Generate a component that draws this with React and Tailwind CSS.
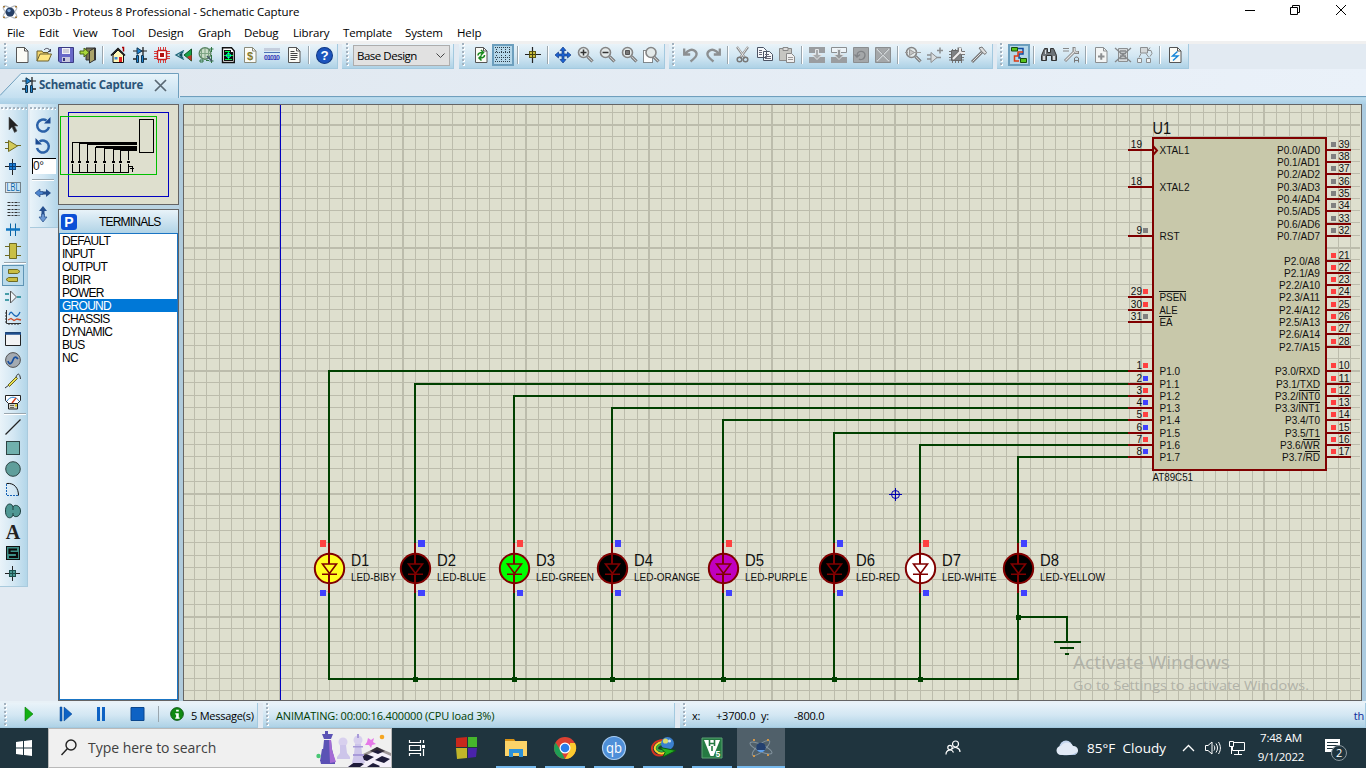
import React from "react";

const Svg = ({ children, s = 16, vb = "0 0 16 16", className = "" }) => (
  <svg width={s} height={s} viewBox={vb} fill="none" className={"shrink-0 overflow-visible " + className}>
    {children}
  </svg>
);

const Page = ({ c = "#555", f = "#fbfbf6", children }) => (
  <Svg>
    <path d="M2.500 .5h8L14 4v11.500H2.500z" fill={f} stroke={c} />
    <path d="M10.500 .5v3.500H14" stroke={c} />
    {children}
  </Svg>
);

const Diode = () => (
  <Svg>
    <path d="M1 4h14" stroke="#222" />
    <path d="M5 .8v6.500l5-3.300z" fill="#1e84d2" stroke="#12354f" />
    <path d="M11 0v8M1 12h3M12 12h3" stroke="#222" strokeWidth="1.300" />
    <path d="M4.500 8.500h2v7h-2zM9.500 8.500h2v7h-2z" fill="#1e84d2" stroke="#12354f" />
  </Svg>
);

const Mag = ({ children, dotted }) => (
  <Svg>
    {dotted && <path d="M.5 3.500h9v12h-9z" fill="#fff" stroke="#222" strokeDasharray="1 1" />}
    <path d="M10.500 9.500l5 5" stroke="#5b5b5b" strokeWidth="3" />
    <path d="M10.500 9.500l5 5" stroke="#c9c9c9" strokeWidth="1.200" />
    <circle cx={dotted ? 8 : 6.500} cy="5.500" r="5" fill="#e3e9e9" stroke="#858585" strokeWidth="1.600" />
    {children}
  </Svg>
);

const Atom = ({ s = 16 }) => (
  <Svg s={s}>
    <ellipse cx="8" cy="8" rx="8.500" ry="3" stroke="#b9bec4" transform="rotate(40 8 8)" />
    <ellipse cx="8" cy="8" rx="8.500" ry="3" stroke="#b9bec4" transform="rotate(-40 8 8)" />
    <circle cx="8" cy="8" r="4.500" fill="#263f66" />
    <circle cx="7" cy="6.600" r="1.700" fill="#7fa7d8" />
    <path d="M1 2h2v1.500H1zM13 2h2v1.500h-2zM1 12.500h2V14H1zM13 12.500h2V14h-2z" fill="#a3793a" />
  </Svg>
);

const G = "#8c8f91";
const icons = {
  new: <Page />,
  open: (
    <Svg>
      <path d="M1 14V4h5l1 1.500h5V7" fill="#f3d56b" stroke="#6b6030" />
      <path d="M1 14l3-7h11.500l-3 7z" fill="#ffe680" stroke="#6b6030" />
      <path d="M8 3c2-2.500 5-2 6 1M14.500 2v2.500H12" stroke="#445" />
    </Svg>
  ),
  save: (
    <Svg>
      <path d="M.5 .5h15v15H2l-1.500-1.500z" fill="#6868c8" stroke="#3b3b83" />
      <path d="M4 1h8v6H4z" fill="#f2f2fa" />
      <path d="M4 10h8v5H4z" fill="#c9c9dd" /><path d="M5 11h2v3H5z" fill="#33337a" />
      <path d="M5 3h6M5 5h6" stroke="#aab" />
    </Svg>
  ),
  exit: (
    <Svg>
      <path d="M6 1h9.500v12H6z" fill="#777152" stroke="#333" />
      <path d="M9.500 4l5-3v12l-5 3z" fill="#aaa36a" stroke="#333" />
      <path d="M0 4h4V1l5 4.500L4 10V7H0z" fill="#a8d63a" stroke="#486616" />
    </Svg>
  ),
  home: (
    <Svg>
      <path d="M3 8v7.500h10.500V8L8 3z" fill="#fff8b8" stroke="#111" />
      <path d="M1 8.500L8 1.500l7 7" stroke="#111" strokeWidth="1.500" />
      <path d="M12 .5h1.500v4" stroke="#a00" strokeWidth="1.500" />
      <path d="M9 10h3v5H9z" fill="#e02020" /><path d="M4.500 10h3v2.500h-3z" fill="#3a8ad8" />
    </Svg>
  ),
  diode: <Diode />,
  pcb: (
    <Svg>
      <path d="M4.500 0v16M6.500 0v16M9.500 0v16M11.500 0v16M0 4.500h16M0 6.500h16M0 9.500h16M0 11.500h16" stroke="#d84040" />
      <rect x="3.500" y="3.500" width="9" height="9" rx="1" fill="#fff" stroke="#c81c1c" strokeWidth="1.500" />
      <rect x="6" y="6" width="4" height="4" fill="#b01010" />
    </Svg>
  ),
  cone: (
    <Svg>
      <path d="M8 3.500L0 8l8 4.500M7 5L4 8l3 3" stroke="#1d6477" strokeWidth="1.300" fill="#bfe0ea" /><circle cx="5" cy="8" r="1.500" fill="#124d5c" />
      <path d="M8 8l7.500-6v12z" fill="#17a24a" stroke="#135529" /><path d="M11 10l4.500 4V8z" fill="#c33426" />
    </Svg>
  ),
  gerber: (
    <Svg>
      <circle cx="7" cy="6.500" r="5.800" fill="#c9dcc8" stroke="#5b8563" strokeWidth="1.400" />
      <path d="M1.500 6.500h11M7 1v11M3.500 3v7M10.500 3v7" stroke="#7da383" />
      <path d="M2 13h3v2H2zM8 13.500h3M13.500 0v5M13.500 8v8M11.500 2h4M11.500 14h4" stroke="#2f7440" />
      <path d="M9 9l5 5" stroke="#456" strokeWidth="1.500" />
    </Svg>
  ),
  greendoc: (
    <Svg>
      <path d="M2.500 .8h9L14.300 4v11.500H2.500z" fill="#fff" stroke="#111" strokeWidth="1.400" />
      <path d="M4 3h7v2h2v9H4z" fill="#101010" />
      <path d="M5 4.500h5M5 12.500h7M4 8.500h9M8.500 5v7" stroke="#0f4" />
      <circle cx="8.500" cy="8.500" r="2" stroke="#0fe" />
    </Svg>
  ),
  dollar: (
    <Page c="#8b8b7a">
      <text x="5" y="12.500" fontSize="11" fill="#837a2b" fontFamily="Liberation Sans" fontWeight="bold">$</text>
    </Page>
  ),
  bits: (
    <Svg>
      <path d="M0 2.500h16" stroke="#c5cedd" strokeWidth="3" />
      <path d="M0 5.500h16" stroke="#4d73b5" />
      <text x="0" y="13" textLength="16" fontSize="7" fill="#3434b6" fontFamily="Liberation Sans" fontWeight="bold">01010</text>
    </Svg>
  ),
  doc: <Page><path d="M4.500 6.500h7M4.500 8.500h7M4.500 10.500h7M4.500 12.500h5M4.500 4.500h4" stroke="#444" /></Page>,
  help: (
    <Svg s={17}>
      <circle cx="8" cy="8" r="7.500" fill="#1c54bd" stroke="#123a85" />
      <text x="4.300" y="12.500" fontSize="12.500" fill="#fff" fontFamily="Liberation Sans" fontWeight="bold">?</text>
    </Svg>
  ),
  refresh: (
    <Page>
      <path d="M5 8.500C5 6 6.500 5.500 9.500 5.500M8 3l2.500 2.500L8 8M11.500 8c0 2.500-1.500 3-4.500 3M8.500 8.500L6 11l2.500 2.500" stroke="#17891c" strokeWidth="1.500" />
    </Page>
  ),
  grid: (
    <Svg>
      <g fill="#2c3b46">
        {[1, 6, 11, 15].map((y) => [0, 2, 4, 6, 8, 10, 12, 14].map((x) => <rect key={x + "-" + y} x={x} y={y - 1} width="1" height="1" />))}
        {[1, 6, 10, 14].map((x) => [2, 4, 8, 12].map((y) => <rect key={x + "," + y} x={x} y={y} width="1" height="1" />))}
      </g>
    </Svg>
  ),
  origin: (
    <Svg><path d="M7.500 0v16M0 7.500h16" stroke="#222" strokeWidth="1.200" /><rect x="4.500" y="4.500" width="6" height="6" fill="#c9be3d" stroke="#5d5815" /><path d="M7.500 4.500v6M4.500 7.500h6" stroke="#444010" /></Svg>
  ),
  move: <Svg><path d="M8 0l3 3.500H9V7h3.500V5L16 8l-3.500 3V9H9v3.500h2L8 16l-3-3.500h2V9H3.500v2L0 8l3.500-3v2H7V3.500H5z" fill="#1b62d2" stroke="#153b85" strokeWidth=".7" /></Svg>,
  zin: <Mag><path d="M3.500 5.500h6M6.500 2.500v6" stroke="#333" strokeWidth="1.500" /></Mag>,
  zout: <Mag><path d="M3.500 5.500h6" stroke="#333" strokeWidth="1.500" /></Mag>,
  zall: <Mag><path d="M4.500 3.500h4v4h-4z" fill="#777" stroke="#555" /></Mag>,
  zarea: <Mag dotted />,
  undo: <Svg><path d="M1.200 1.500v6h6M2 7C5 3 9 1.500 12 4s2 5.500-4.500 10.500" stroke={G} strokeWidth="2.300" /></Svg>,
  redo: <Svg><path d="M14.800 1.500v6h-6M14 7C11 3 7 1.500 4 4s-2 5.500 4.500 10.500" stroke={G} strokeWidth="2.300" /></Svg>,
  cut: <Svg><path d="M2 0l8 11M13 0L5 11" stroke="#888" strokeWidth="2.200" /><path d="M2.500 0l7.500 11M12.500 0L5 11" stroke="#eee" strokeWidth=".9" /><circle cx="4.500" cy="12.500" r="2.300" stroke="#777" strokeWidth="1.500" /><circle cx="10.500" cy="12.500" r="2.300" stroke="#777" strokeWidth="1.500" /></Svg>,
  copy: <Svg><path d="M.5 .5h6l3 3v7h-9zM6.500 4.500h6l3 3v6h-9z" fill="#f6f8fb" stroke="#4b5364" /><path d="M2 3.500h3M2 5.500h3M2 7.500h3M8 7.500h4M8 9.500h6M8 11.500h6" stroke="#667" /></Svg>,
  paste: <Svg><path d="M.5 1.500h12v12H.5z" fill="#c6c6c2" stroke="#8a8a8a" /><path d="M4 .5h5v3H4z" fill="#ddd" stroke="#888" /><path d="M7.500 6.500h5l3 3v6h-8z" fill="#f0f0f0" stroke="#888" /><path d="M9 10.500h5M9 12.500h5" stroke="#999" /></Svg>,
  bcopy: <Svg><path d="M0 0h16v6H0zM0 10h16v6H0z" fill="#9a9da0" /><path d="M6.500 2.500h3v5H13L8 12.500 3 7.500h3.500z" fill="#a9acae" stroke="#e4e7e9" /></Svg>,
  bmove: <Svg><path d="M.5 .5h15v5H.5z" fill="#eef4f8" stroke={G} /><path d="M0 10h16v6H0z" fill="#9a9da0" /><path d="M6.500 2.500h3v5H13L8 12.500 3 7.500h3.500z" fill="#96999b" stroke="#dfe3e5" /></Svg>,
  brot: <Svg><path d="M.5 .5h15v15H.5z" fill="#a4a7a9" stroke="#8b8e90" /><path d="M4 9C4 3 12 3 12 8s-5 5-6 4M1.500 7.500L4 10l3-2.500" stroke="#808386" strokeWidth="1.300" /></Svg>,
  bdel: <Svg><path d="M.5 .5h15v15H.5z" fill="#a4a7a9" stroke="#8b8e90" /><path d="M2 2l12 12M14 2L2 14" stroke="#d3d7d9" strokeWidth="1.300" /><path d="M3 2l11 11M13 2L2 13" stroke="#84878a" strokeWidth=".6" /></Svg>,
  pick: <Mag><path d="M0 5.500h3M9 5.500h7" stroke="#999" /><path d="M4.500 2.500l5 3-5 3z" fill="#c5c5c5" stroke="#999" /></Mag>,
  mkdev: <Svg><path d="M0 8h4M0 12h4M9 10.500h5M10 3.500h6M13 .5v6" stroke={G} strokeWidth="1.500" /><path d="M4 5.500v10l6-5z" fill="#d9dddf" stroke={G} /></Svg>,
  pkg: <Svg><path d="M3.500 2v14M6.500 2v14M9.500 2v14M12.500 2v14M0 4.500h15M0 7.500h15M0 10.500h15M0 13h15" stroke="#777" /><path d="M2.500 3.500h10v10h-10z" fill="#7f8284" stroke="#666" /><path d="M4 12l7-7M10.500 .5v4L12 6h4" stroke="#777" strokeWidth="4" /><path d="M4 12l7-7M11 1v3.500L12.500 6H16" stroke="#eee" strokeWidth="2" /></Svg>,
  hammer: <Svg><path d="M1 15L11 5" stroke="#777" strokeWidth="3" /><path d="M1.500 14.500L10.500 5.500" stroke="#ddd" strokeWidth="1" /><path d="M8 1l3-1 4.500 5.500L14 7.500 11 5z" fill="#ddd" stroke="#777" /></Svg>,
  wire: <Svg><path d="M7 1.500h5V7H8v4h2" stroke="#124b9e" strokeWidth="1.500" /><path d="M8 14H3.500V9H7V5h5" stroke="#dd3b14" strokeWidth="1.500" /><path d="M.5 .5h6v3.500h-6zM9.500 11.500h6v4h-6z" fill="#58c21c" stroke="#174d0b" /></Svg>,
  find: <Svg><path d="M3.500 1.500h3v4h3v-4h3l3 7v5h-5v-5h-5v5h-5v-5z" fill="#6d7378" stroke="#333" /><path d="M2 9h2v4H2zM12 9h2v4h-2zM4 3h1v4H4z" fill="#d5d9dc" /></Svg>,
  prop: <Svg><path d="M0 1.500h6M0 4h6" stroke="#888" /><path d="M2 14L11 5M11 0v4l1.500 1.500H16" stroke="#888" strokeWidth="3" /><path d="M2.500 13.500L11 5M11.300 1v3l1.200 1.200H15" stroke="#e5e5e5" strokeWidth="1.100" /><path d="M11.500 15.500V11l1.500-1h1l1.500 1v4.500M11.500 13.500h4" stroke="#777" /></Svg>,
  newsh: <Page c={G} f="#f3f5f5"><path d="M5 9.500h6.500M8.250 6.200v6.600" stroke={G} strokeWidth="2" /></Page>,
  delsh: <Svg><path d="M3.500 1.500h9v13h-9z" fill="#d6dadc" stroke={G} /><path d="M5 4h6M5 6.500h6M5 9h6M5 11.500h6M0 1l16 14M16 1L0 15" stroke="#85888b" strokeWidth="1.300" /></Svg>,
  parent: <Svg><path d="M.5 11.500h4v4h-4zM9.500 11.500h4v4h-4z" fill="#eef2f4" stroke={G} /><path d="M4 6.500l-2 4M9 6.500l3 4M13 .5l-2 3h3l1 3-2 3" stroke={G} /><path d="M3.500 .5h7v5.500h-7z" fill="#d4d8da" stroke={G} /></Svg>,
  elec: <Page><path d="M10.500 4.500L5.500 9h5.500L6 13.500" stroke="#1686d8" strokeWidth="1.400" /></Page>,

  arrow: <Svg><path d="M4 0v13l3-3 2.500 5.500L12 14 9.500 9H13z" fill="#222" stroke="#555" strokeWidth=".6" /></Svg>,
  comp: <Svg><path d="M0 4.500h4M0 10.500h4M12 7.500h4" stroke="#6f6b22" /><path d="M3.500 2.500v11l9-5.500z" fill="#d3ca58" stroke="#6f6b22" /></Svg>,
  junc: <Svg><path d="M7.500 0v16M0 7.500h16" stroke="#222" /><rect x="4.500" y="4.500" width="6" height="6" fill="#1c80d8" stroke="#0a4a8e" /><path d="M7.500 5v5M5 7.500h5" stroke="#0a3b70" /></Svg>,
  lbl: <Svg><path d="M.5 2.500h15v10H.5z" stroke="#222" strokeDasharray="1 1" /><text x="1.500" y="11.200" textLength="13" fontSize="10" fill="#0867ac" fontFamily="Liberation Sans" lengthAdjust="spacingAndGlyphs">LBL</text></Svg>,
  script: <Svg><path d="M2.500 1.500h12M2.500 4.500h12M2.500 8.500h12M2.500 11.500h12M2.500 14.500h12" stroke="#333" strokeDasharray="3 1 2 1" /></Svg>,
  bus: <Svg><path d="M5.500 1.500V14M10.500 1.500V14" stroke="#0864a4" /><path d="M1 7.500h14" stroke="#0f75c0" strokeWidth="2.500" /></Svg>,
  sub: <Svg><path d="M0 3.500h4M0 12.500h4M12 3.500h4M12 12.500h4" stroke="#6f6b22" /><path d="M4.500 .5h7v15h-7z" fill="#c9bf45" stroke="#6f6b22" /></Svg>,
  term: <Svg><path d="M3.500 1.500h9l2.500 2-2.500 2h-9zM12.500 9.500h-9l-2.500 2 2.500 2h9z" fill="#cabd42" stroke="#6f6b22" /></Svg>,
  pin: <Svg><path d="M0 5h4M0 11h4M12 8h4" stroke="#15838e" strokeWidth="1.300" /><path d="M5.500 2v12l6-6z" fill="#eef5fa" stroke="#555" /></Svg>,
  graph: <Svg><path d="M1.500 0v13.500H16M0 3h2M0 6h2M0 9h2M0 12h2M4 13v2M7 13v2M10 13v2M13 13v2" stroke="#333" /><path d="M4 5c2-5 3-2 5 0s4 2 6-3" stroke="#1767b7" strokeWidth="1.300" /><path d="M3 10l3-1.500 3 2 3-1.500 4 1" stroke="#ca4b28" strokeWidth="1.300" /></Svg>,
  win: <Svg><path d="M.5 1.500h15v13H.5z" fill="#f2f3f4" stroke="#222" /><path d="M0 2.500h16" stroke="#1e4f8f" strokeWidth="2.500" /></Svg>,
  gen: <Svg><circle cx="8" cy="8" r="7.400" fill="#a3aab1" stroke="#555" /><path d="M3 9c1.500 5 4 2 5-1s2.500-4 5-1" stroke="#174f9f" strokeWidth="1.700" /></Svg>,
  probe: <Svg><path d="M0 15l4-3M11 4c2-5 4-3 4.500 2" stroke="#333" /><path d="M3 12l8-8 1.500 1.500-8 8z" fill="#e8e050" stroke="#666324" /></Svg>,
  meter: <Svg><path d="M.5 1.500h15v5l-3 3h-9l-3-3z" fill="#fff" stroke="#222" /><path d="M2 7c3-5 9-5 12 0" stroke="#2a7dcb" /><path d="M7 9l4-5" stroke="#d33d1b" strokeWidth="1.500" /><path d="M3.500 9.500h9v5.500h-9z" fill="#d5d5cc" stroke="#222" /><path d="M5 11.500h4M5 13.500h4" stroke="#665" /><path d="M10 11.500h2" stroke="#d8c800" strokeWidth="2" /></Svg>,
  line: <Svg><path d="M.5 15.500l15-15" stroke="#222" strokeWidth="1.300" /></Svg>,
  box: <Svg><rect x="1.500" y="1.500" width="13" height="13" fill="#70b0ad" stroke="#2e4444" /></Svg>,
  circ: <Svg><circle cx="8" cy="8" r="7.300" fill="#5f9e9b" stroke="#2e4444" /></Svg>,
  arc: <Svg><path d="M1.500 2v11.500H13" stroke="#1763b5" strokeDasharray="2 1" /><path d="M1.500 1.500c8-1 12 5 12 12" stroke="#111" /></Svg>,
  path: <Svg><path d="M8 4C7-.5.5-.5.5 8S7 16 8 12c1.500 3 7.500 2 7.500-4S9 1 8 4z" fill="#4f9894" stroke="#1d3f3e" /><path d="M8 4v3M8 10v2" stroke="#1d3f3e" /></Svg>,
  text: <div className="font-['Liberation_Serif'] text-[20px] leading-[20px] font-bold text-[#222]">A</div>,
  sym: <Svg><rect x="1.500" y="1.500" width="13" height="13" fill="#3d8f87" stroke="#111" /><path d="M12 4.500H4.500V8H12v4H4" stroke="#0a0a0a" strokeWidth="2.200" /></Svg>,
  mark: <Svg><path d="M7.500 0v15M0 7.500h15" stroke="#222" /><rect x="4.500" y="4.500" width="6" height="6" fill="#4a9a94" stroke="#1d4f4b" /><path d="M7.500 5v5M5 7.500h5" stroke="#1d4f4b" /></Svg>,
};

const HGrip = () => (
  <svg width="4" height="26" className="shrink-0">
    {[1, 5, 9, 13, 17, 21].map((y) => (
      <g key={y}><rect x="1" y={y + 1} width="2" height="2" fill="#fff" /><rect x="0" y={y} width="2" height="2" fill="#a3b2bf" /></g>
    ))}
  </svg>
);

const VGrip = () => (
  <svg width="26" height="4" className="shrink-0">
    {[0, 4, 8, 12, 16, 20, 24].map((x) => (
      <g key={x}><rect x={x + 1} y="1" width="2" height="2" fill="#fff" /><rect x={x} y="0" width="2" height="2" fill="#a3b2bf" /></g>
    ))}
  </svg>
);

const Sep = () => (
  <div className="flex h-[18px] w-2 shrink-0 justify-center">
    <div className="w-px bg-[#9aa6ae]" /><div className="w-px bg-white" />
  </div>
);

const Cells = ({ names, active }) =>
  names.map((n, i) =>
    n === "|" ? <Sep key={i} /> : (
      <div key={i} className={"flex h-[22px] w-[22px] shrink-0 items-center justify-center " + (n === active ? "border-2 border-[#6c9fbe] bg-[#b5d7e9]" : "")}>
        {icons[n]}
      </div>
    )
  );

const bar = "flex items-center border-r border-b border-[#a3c9df] bg-linear-to-b from-[#e9f3f9] via-[#d3e7f3] to-[#aed2e6] ";
const topBar = bar + "pb-[2px] ";

const tools = ["arrow", "comp", "junc", "lbl", "script", "bus", "sub", "-", "term", "pin", "graph", "win", "gen", "probe", "meter", "-", "line", "box", "circ", "arc", "path", "text", "sym", "mark"];

/* ---------- schematic ---------- */
const OX = 895, OY = 494, P = 12.3;
const T = ({ x, y, s = 10.6, w, end, children }) => (
  <text x={x} y={y} fontSize={s} fill="#111" textAnchor={end ? "end" : "start"} textLength={w} lengthAdjust="spacingAndGlyphs" fontFamily="'Liberation Sans', Arial, sans-serif">{children}</text>
);

const Grid = () => {
  const out = [];
  for (let k = -58; k <= 38; k++) {
    const x = Math.round(OX + k * P), m = k % 10 === 0;
    out.push(<rect key={"x" + k} x={m ? x - 1 : x} y="105" width={m ? 2 : 1} height="595" fill="#bcbcac" />);
  }
  for (let k = -32; k <= 17; k++) {
    const y = Math.round(OY + k * P), m = k % 10 === 0;
    out.push(<rect key={"y" + k} x="184" y={y - 1} width="1176" height={m ? 2 : 1} fill="#bcbcac" />);
  }
  return out;
};

const leds = [
  [329, "D1", "LED-BIBY", "#ffff20", 371, 45, 1],
  [415, "D2", "LED-BLUE", "#000", 384, 49, 0],
  [514, "D3", "LED-GREEN", "#00ff00", 396, 58, 1],
  [612, "D4", "LED-ORANGE", "#000", 408, 66, 0],
  [723, "D5", "LED-PURPLE", "#c000c0", 420, 62.5, 1],
  [834, "D6", "LED-RED", "#000", 433, 44, 0],
  [920, "D7", "LED-WHITE", "#fff", 445, 54.5, 1],
  [1018, "D8", "LED-YELLOW", "#000", 457, 65, 0],
];

const R = "#ff4040", B = "#4040ff", Y = "#808080";
const left = [
  [150, "19", "XTAL1", null, 30], [187, "18", "XTAL2", null, 30], [236, "9", "RST", Y, 20],
  [297, "29", "PSEN", R, 27, 1], [310, "30", "ALE", R, 18], [322, "31", "EA", Y, 13, 1],
  [371, "1", "P1.0", R, 20.5], [384, "2", "P1.1", B, 20], [396, "3", "P1.2", R, 20.5], [408, "4", "P1.3", B, 20.5],
  [420, "5", "P1.4", R, 20.5], [433, "6", "P1.5", B, 20.5], [445, "7", "P1.6", R, 20.5], [457, "8", "P1.7", B, 20.5],
];
const right = [
  [150, 39, "P0.0/AD0", 43], [162, 38, "P0.1/AD1", 43], [174, 37, "P0.2/AD2", 43], [187, 36, "P0.3/AD3", 43],
  [199, 35, "P0.4/AD4", 43], [211, 34, "P0.5/AD5", 43], [224, 33, "P0.6/AD6", 43], [236, 32, "P0.7/AD7", 43],
  [261, 21, "P2.0/A8", 36], [273, 22, "P2.1/A9", 36], [285, 23, "P2.2/A10", 41], [297, 24, "P2.3/A11", 41],
  [310, 25, "P2.4/A12", 41], [322, 26, "P2.5/A13", 41], [334, 27, "P2.6/A14", 41], [347, 28, "P2.7/A15", 41],
  [371, 10, "P3.0/RXD", 45], [384, 11, "P3.1/TXD", 44], [396, 12, "P3.2/INT0", 45, 21], [408, 13, "P3.3/INT1", 45, 21],
  [420, 14, "P3.4/T0", 35], [433, 15, "P3.5/T1", 35], [445, 16, "P3.6/WR", 40, 17], [457, 17, "P3.7/RD", 38, 15],
];

const Schematic = () => (
  <svg width="1177" height="595" viewBox="184 105 1177 595" className="block">
    <rect x="184" y="105" width="1177" height="595" fill="#dedfce" />
    <Grid />
    <rect x="280" y="105" width="1" height="595" fill="#0000c0" />
    <g stroke="#004000" strokeWidth="2">
      {leds.map(([x, , , , y]) => <path key={x} d={`M1129 ${y}H${x}V679`} fill="none" />)}
      <path d="M328 679H1019M1018 617H1067V641" fill="none" />
      <path d="M1054 642h27M1060 648h14M1065 654h4" />
    </g>
    {leds.slice(1, 7).map(([x]) => <rect key={x} x={x - 2} y="677" width="5" height="5" fill="#004000" />)}
    <rect x="1016" y="615" width="5" height="5" fill="#004000" />
    {leds.map(([x, n, l, c, , w, on], i) => (
      <g key={n}>
        <path d={`M${x} 543v50`} stroke="#800000" strokeWidth="2" />
        <circle cx={x + 0.5} cy="568.500" r="14.700" fill={c} stroke="#800000" strokeWidth="2" />
        <path d={`M${x} 553v11M${x} 574v10`} stroke="#800000" strokeWidth="2" fill="none" />
        <path d={`M${x - 6.5} 564h14l-7 9.500zM${x - 7} 574.300h15`} stroke="#800000" strokeWidth="1.600" fill="none" />
        <rect x={i ? x + 3 : x - 9} y="540" width={i === 1 ? 7 : 6} height="7" fill={on ? R : B} />
        <rect x={i ? x + 3 : x - 9} y="590" width={i === 1 ? 7 : 6} height="6" fill={B} />
        <T x={x + 22} y="566" s="15.800" w={i ? 19 : 18}>{n}</T>
        <T x={x + 22} y="581" w={w}>{l}</T>
      </g>
    ))}
    <g stroke="#0000b0" fill="none">
      <circle cx="895.500" cy="494.500" r="4" />
      <path d="M889 494.500h13M895.500 488v13" />
    </g>
    <rect x="1153" y="138" width="173" height="332" fill="#c8c8aa" stroke="#800000" strokeWidth="2" />
    <path d="M1153 146l4 4.500-4 4.500" stroke="#800000" strokeWidth="2" fill="none" />
    <T x="1152.500" y="134" s="15.800" w="18.500">U1</T>
    <T x="1152.500" y="481" w="40.500">AT89C51</T>
    {left.map(([y, n, l, c, w, o]) => (
      <g key={n}>
        <rect x="1128" y={y - 1} width="25" height="2" fill="#800000" />
        <T x="1142" y={y - 2} w={n.length * 5.6} end>{n}</T>
        {c && <rect x="1143" y={y - 8} width="5" height="5" fill={c} />}
        <T x="1159.500" y={y + 4} w={w}>{l}</T>
        {o && <rect x="1159" y={y - 6} width={w} height="1" fill="#111" />}
      </g>
    ))}
    {right.map(([y, n, l, w, o]) => (
      <g key={n}>
        <rect x="1327" y={y - 1} width="24" height="2" fill="#800000" />
        <T x="1338.500" y={y - 2} w={11.2}>{n}</T>
        <rect x="1331" y={y - 8} width="5" height="5" fill={y < 240 ? Y : R} />
        <T x="1320" y={y + 4} w={w} end>{l}</T>
        {o && <rect x={1320 - o} y={y - 6} width={o} height="1" fill="#111" />}
      </g>
    ))}
    <g fill="#b1b2a8" fontFamily="'Open Sans', sans-serif">
      <text x="1073" y="669" fontSize="18.500" textLength="157" lengthAdjust="spacingAndGlyphs">Activate Windows</text>
      <text x="1073" y="690" fontSize="13.500" textLength="236" lengthAdjust="spacingAndGlyphs">Go to Settings to activate Windows.</text>
    </g>
  </svg>
);

const Overview = () => (
  <svg width="119" height="99" viewBox="59 105 119 99" className="block" fill="none" shapeRendering="crispEdges">
    <rect x="59" y="105" width="119" height="99" fill="#dedfce" />
    <rect x="68.500" y="112.500" width="100" height="84" stroke="#0000c0" />
    <rect x="139.500" y="119.500" width="14" height="33" stroke="#000" />
    <rect x="60.500" y="116.500" width="96" height="58" stroke="#00c000" />
    <path d="M72.500 142.500v18M72.500 164v8.500H128.500V164M128.500 160V151M79.500 143v18M79.500 164v8M87.500 144v17M87.500 164v8M95.500 147v14M95.500 164v8M104.500 148v13M104.500 164v8M113.500 149v12M113.500 164v8M120.500 150v11M120.500 164v8M128 166.500h4v5M130 168.500h4" stroke="#000" />
    <path d="M72 142.500h65M79 143.500h58M87 144.500h50M96 146.500h41M104 148.500h33M113 149.500h24M120 150.500h17M96 147.500h41" stroke="#000" />
    <path d="M71 161.500h3M78 161.500h3M86 161.500h3M94 161.500h3M103 161.500h3M112 161.500h3M119 161.500h3M127 161.500h3" stroke="#000" strokeWidth="2" />
  </svg>
);

const tasks = [
  <Svg s={24} vb="0 0 24 24"><path d="M1 2l11-1v10H1z" fill="#c8281c" /><path d="M13 1h9v10h-9z" fill="#46b52c" /><path d="M1 12h11v10L2 23z" fill="#c1b52a" /><path d="M13 12h9l-1 9-8 1z" fill="#4a23ab" /></Svg>,
  <Svg s={24} vb="0 0 24 24"><path d="M1 3h9l2 3H1z" fill="#d99213" /><path d="M1 5h22v15H1z" fill="#fbd368" /><path d="M5 13h14v8h-4v-4h-6v4H5z" fill="#2d92d8" /></Svg>,
  <Svg s={24} vb="0 0 24 24"><circle cx="12" cy="12" r="11" fill="#dc4132" /><path d="M2.500 6.500L8 15l4 8A11 11 0 0 1 2.500 6.500z" fill="#1f9d55" /><path d="M12 23l5-9V7h5a11 11 0 0 1-10 16z" fill="#fccb2f" /><circle cx="12" cy="12" r="5.500" fill="#fff" /><circle cx="12" cy="12" r="4.300" fill="#2b7de9" /></Svg>,
  <Svg s={26} vb="0 0 26 26"><circle cx="13" cy="13" r="11.500" fill="#4e8fd8" stroke="#a9cdf2" strokeWidth="1.200" /><text x="5" y="17.500" fontSize="15" fill="#fff" fontFamily="Open Sans" textLength="16" lengthAdjust="spacingAndGlyphs">qb</text></Svg>,
  <Svg s={26} vb="0 0 26 26"><path d="M14 5C4 5 0 12 3 17s9 4 13 1" stroke="#d83421" strokeWidth="2" /><path d="M14 7c-8 0-11 6-8 9s7 3 10 1" stroke="#f6d52f" strokeWidth="2" /><path d="M14 9c-7 0-8 5-6 6s4 2 6 0" stroke="#35b43e" strokeWidth="2" /><circle cx="17.500" cy="8.500" r="6.500" fill="#3b80cf" /><circle cx="15.500" cy="6" r="2.600" fill="#d8dc6b" /><circle cx="19.500" cy="6" r="1.500" fill="#cfe3f6" /><path d="M10 12.500l16 3-13 6.500 2-4.500z" fill="#28b324" stroke="#0b5b10" /></Svg>,
  <Svg s={22} vb="0 0 22 22"><path d="M1 1h20v20H1z" fill="#257a43" stroke="#5ba273" /><path d="M3 3h16l-6.500 16h-3z" fill="#fff" /><path d="M8.500 3v6M13.500 3v6M8 6.500h6M11 9v5" stroke="#257a43" strokeWidth="1.600" /><text x="14.500" y="19.500" fontSize="8.500" fill="#fff" fontFamily="Liberation Sans" fontWeight="bold">5</text></Svg>,
  <Svg s={26} vb="0 0 26 26"><ellipse cx="13" cy="13" rx="12" ry="3.500" stroke="#84949e" transform="rotate(25 13 13)" /><ellipse cx="13" cy="13" rx="11" ry="3.500" stroke="#84949e" transform="rotate(-40 13 13)" /><circle cx="13" cy="12.500" r="4.800" fill="#23406f" /><path d="M9 15c2 3 6 3 8 0z" fill="#5fa0e8" /><path d="M5 4h2v2H5zM19 4h2v2h-2zM5 20h2v2H5zM19 19h2v2h-2z" fill="#d0964b" /></Svg>,
];

const Chess = () => (
  <svg width="75" height="38" viewBox="0 0 75 38" fill="none">
    <path d="M30 38L61 18l14 6v14z" fill="#f4effa" />
    <path d="M61 18l8 4-7 3-8-3zM50 25l8 3-7 4-9-3zM66 27l8 3-6 4-9-3zM40 32l8 3-4 3H32zM57 34l7 3-1 1H51z" fill="#1e1b3a" />
    <path d="M61 18l14 6v3L61 21l-14 7v-3z" fill="#4a4038" opacity=".5" />
    <path d="M6 5h3V2h3v3h5l-2 5H8zM8 11h7l1 10H7zM6 20h10l3 12H4z" fill="#5b53b5" />
    <path d="M4 31h15v4H5z" fill="#5a4fb4" />
    <path d="M13 11h2l1 10 4 12-6 1z" fill="#a46ad4" />
    <circle cx="27" cy="13" r="4.500" fill="#d8d0ee" /><path d="M24 16h6l1 8 3 4v2H21v-2l3-4z" fill="#cdc5ea" />
    <circle cx="42" cy="11" r="4.500" fill="#d8d0ee" /><path d="M39 15h6l1 10 3 9H36l2-9z" fill="#cdc5ea" /><path d="M41 5h2v4h-2zM37 25h11v2H37zM37 17h10v1.500H37z" fill="#a79ad8" />
    <path d="M52 9l3 2 3-2-1 4 3 2-4 1-1 3-2-3-4 0 2-3z" fill="#e67be8" />
    <circle cx="66" cy="8" r="2.300" fill="#f5a623" /><circle cx="2.500" cy="27" r="2.200" fill="#48c774" />
  </svg>
);

const menus = [["File", 32], ["Edit", 34], ["View", 39], ["Tool", 36], ["Design", 50], ["Graph", 46], ["Debug", 49], ["Library", 50], ["Template", 62], ["System", 52], ["Help", 30]];

export default function App() {
  return (
    <div className="flex h-[768px] w-[1366px] flex-col overflow-hidden bg-[#e2eaf2] font-['Open_Sans','Noto_Sans',sans-serif] text-[12px] leading-none text-black">
      <div className="flex h-6 shrink-0 items-center bg-white pl-[2px]">
        <Atom />
        <div className="ml-[5px] text-[11.500px] tracking-[-0.070px] whitespace-nowrap">exp03b - Proteus 8 Professional - Schematic Capture</div>
        <svg className="ml-auto" width="122" height="24" viewBox="1244 0 122 24" fill="none" stroke="#000">
          <path d="M1245 10.500h10M1290.500 7.500h7v7h-7zM1292.500 7.500v-2h7v7h-2M1336 5l10 10M1346 5l-10 10" />
        </svg>
      </div>
      <div className="flex h-[17px] shrink-0 items-center bg-white pl-[7px] text-[11.500px] tracking-[-0.150px]">
        {menus.map(([m, w]) => <div key={m} className="shrink-0" style={{ width: w }}>{m}</div>)}
      </div>
      <div className="h-[3px] shrink-0 bg-[#f0f0f0]" />

      <div className="flex h-[25px] shrink-0">
        <div className={topBar + "w-[338px] pl-1"}><HGrip /><div className="w-[3px]" /><Cells names={["new", "open", "save", "exit", "|", "home", "diode", "pcb", "cone", "gerber", "greendoc", "dollar", "bits", "doc", "|", "help"]} /></div>
        <div className={topBar + "ml-1 w-[112px] pl-1"}>
          <HGrip />
          <div className="ml-[3px] flex h-[21px] w-[97px] items-center justify-between border border-[#adadad] bg-[#e1e1e1] pt-px pr-1 pl-[3px] text-[11.500px] tracking-[-0.480px]">
            Base Design
            <svg width="9" height="6" viewBox="0 0 9 6" fill="none" stroke="#444"><path d="M.5 .5l4 4 4-4" /></svg>
          </div>
        </div>
        <div className={topBar + "ml-[5px] w-[206px] pl-[3px]"}><HGrip /><div className="w-1" /><Cells active="grid" names={["refresh", "grid", "|", "origin", "|", "move", "zin", "zout", "zall", "zarea"]} /></div>
        <div className={topBar + "ml-1 w-[324px] pl-[3px]"}><HGrip /><div className="w-1" /><Cells names={["undo", "redo", "|", "cut", "copy", "paste", "|", "bcopy", "bmove", "brot", "bdel", "|", "pick", "mkdev", "pkg", "hammer"]} /></div>
        <div className={topBar + "ml-1 w-[192px] pl-[3px]"}><HGrip /><div className="w-1" /><Cells active="wire" names={["wire", "|", "find", "prop", "|", "newsh", "delsh", "parent", "|", "elec"]} /></div>
      </div>

      <div className="flex h-[29px] shrink-0 items-end bg-linear-to-r from-[#dfe7ef] to-[#eaf1f9]">
        <div className="grid h-[25px] w-[180px] shrink-0">
          <svg className="col-start-1 row-start-1" width="180" height="25" viewBox="0 73 180 25" fill="none">
            <defs><linearGradient id="tab" x1="0" y1="0" x2="0" y2="1"><stop stopColor="#e8f4fa" /><stop offset="1" stopColor="#c3dff0" /></linearGradient></defs>
            <path d="M0 98v-3L20.500 73.500H178.500V98" fill="url(#tab)" />
            <path d="M0 95.500L21 73.500H178.500V98" stroke="#6f9fbd" />
          </svg>
          <div className="col-start-1 row-start-1 flex items-center pb-px pl-[21px]">
            <Diode />
            <div className="ml-[2px] w-[111px] text-[11.500px] font-bold tracking-[-0.250px] whitespace-nowrap text-[#2a5478]">Schematic Capture</div>
            <svg width="22" height="16" viewBox="0 0 22 16" stroke="#596873" strokeWidth="1.700"><path d="M5 3l11 11M16 3L5 14" /></svg>
          </div>
        </div>
        <div className="h-[2px] flex-1 border-t border-[#6f9fbd] bg-[#b4d7ea]" />
      </div>
      <div className="h-[6px] shrink-0 bg-linear-to-b from-[#bcdcee] to-[#aacfe5]" />

      <div className="flex h-[597px] shrink-0">
        <div className="flex w-[28px] flex-col">
          <div className="flex h-[483px] flex-col border-r border-b border-[#a9cadd] bg-linear-to-r from-[#e9f3f9] via-[#d3e7f3] to-[#b3d6e9]">
            <div className="flex h-[10px] items-center pl-[1px]"><VGrip /></div>
            {tools.map((t, i) =>
              t === "-" ? (
                <div key={i} className="ml-1 flex h-1 w-[22px] shrink-0 flex-col justify-center"><div className="h-px bg-[#9aa6ae]" /><div className="h-px bg-white" /></div>
              ) : (
                <div key={i} className={"ml-[2px] flex h-[21px] w-[22px] shrink-0 items-center justify-center " + (t === "term" ? "border border-[#5f94b4] bg-[#b9daeb]" : "")}>{icons[t]}</div>
              )
            )}
          </div>
        </div>
        <div className="flex w-[30px] flex-col pl-[2px]">
          <div className="flex h-[124px] flex-col items-center border-b border-[#a9cadd] bg-linear-to-r from-[#e9f3f9] via-[#d3e7f3] to-[#b3d6e9] pr-[2px]">
            <div className="flex h-[10px] items-center"><VGrip /></div>
            <div className="flex h-[21px] items-center"><Svg><path d="M14 10a6 6 0 1 1-2.500-6.500" stroke="#2c62a8" strokeWidth="2.500" /><path d="M9 6.500h6.500V0z" fill="#1c4b91" /></Svg></div>
            <div className="flex h-[21px] items-center"><Svg><path d="M2 10a6 6 0 1 0 2.500-6.500" stroke="#2c62a8" strokeWidth="2.500" /><path d="M7 6.500H.5V0z" fill="#1c4b91" /></Svg></div>
            <div className="mt-[2px] ml-[2px] h-4 w-6 border-t border-l border-black bg-white pt-[1px] font-['Liberation_Sans'] text-[12px] tracking-[-0.500px] text-[#222]">0°</div>
            <div className="mt-[5px] h-[2px] w-[22px] border-b border-white bg-[#9aa6ae]" />
            <div className="mt-[2px] flex h-[19px] items-center"><Svg><path d="M0 8l5-4v2.500h3v3H5V12z" fill="#4d86cf" stroke="#234b86" strokeWidth=".7" /><path d="M16 8l-5-4v2.500H8v3h3V12z" fill="#26508f" /></Svg></div>
            <div className="flex h-[23px] items-center"><Svg><path d="M8 0L4 5h2.500v3h3V5H12z" fill="#26508f" /><path d="M8 16l-4-5h2.500V8h3v3H12z" fill="#6b98d4" stroke="#234b86" strokeWidth=".7" /></Svg></div>
          </div>
        </div>
        <div className="flex w-[121px] shrink-0 flex-col">
          <div className="h-[101px] border border-[#646464]"><Overview /></div>
          <div className="h-1 bg-[#b9d3e2]" />
          <div className="flex h-[492px] flex-col border border-[#646464] bg-white">
            <div className="flex h-[23px] shrink-0 items-center bg-linear-to-b from-[#e9f3f9] to-[#b0d3e6] pl-[2px]">
              <div className="flex h-4 w-4 items-center justify-center rounded-[3px] bg-[#0b4fd6] font-['Liberation_Sans'] text-[14px] font-bold text-white">P</div>
              <div className="ml-[22px] pt-px font-['Liberation_Sans'] text-[12px] tracking-[-0.800px]">TERMINALS</div>
            </div>
            <div className="flex-1 border border-[#1a75c4] font-['Liberation_Sans'] text-[12px] leading-[15px] tracking-[-0.720px]">
              {["DEFAULT", "INPUT", "OUTPUT", "BIDIR", "POWER", "GROUND", "CHASSIS", "DYNAMIC", "BUS", "NC"].map((t) => (
                <div key={t} className={"h-[13px] pl-[2px] " + (t === "GROUND" ? "bg-[#0078d7] text-white" : "")}>{t}</div>
              ))}
            </div>
          </div>
        </div>
        <div className="w-1 shrink-0 bg-[#b0cbdc]" />
        <div className="w-[1179px] shrink-0 border border-[#646464]"><Schematic /></div>
        <div className="flex-1 bg-[#abcbe0]" />
      </div>

      <div className="h-[2px] shrink-0 bg-[#e8f1f7]" />
      <div className="flex h-[25px] shrink-0 text-[11px] tracking-[-0.200px]">
        <div className={bar + "w-[258px] pl-1"}>
          <HGrip />
          <svg width="160" height="16" viewBox="8 0 160 16" className="mb-[2px] shrink-0">
            <path d="M25 1l8 7-8 7z" fill="#12b012" stroke="#0a7a0a" strokeWidth=".6" />
            <path d="M60 1h2v14h-2zM64 1l8 7-8 7z" fill="#0d62c4" stroke="#0a478f" strokeWidth=".5" />
            <path d="M97 1h3v14h-3zM102 1h3v14h-3z" fill="#0d62c4" />
            <path d="M131 1.500h13v13h-13z" fill="#0d62c4" stroke="#0a478f" />
            <path d="M158.500 0v16" stroke="#9aa6ae" />
          </svg>
          <Svg s={14} className="mb-[2px] ml-[2px]"><circle cx="8" cy="8" r="7.300" fill="#108a12" stroke="#0b5210" /><path d="M7 3h3v2H7zM6 7h4v5h1v1.500H6V12h1V8.500H6z" fill="#fff" /></Svg>
          <div className="ml-[7px] tracking-[-0.250px] whitespace-nowrap">5 Message(s)</div>
        </div>
        <div className={bar + "ml-[5px] w-[412px] pl-[3px]"}><HGrip /><div className="ml-[6px] tracking-[-0.160px] whitespace-nowrap text-[#003c00]">ANIMATING: 00:00:16.400000 (CPU load 3%)</div></div>
        <div className={bar + "ml-[5px] w-[686px] pl-[3px]"}>
          <HGrip />
          <div className="ml-[5px] w-6">x:</div><div className="w-[45px]">+3700.0</div><div className="w-[33px]">y:</div><div>-800.0</div>
          <div className="mr-[1px] ml-auto text-[#0b2c9a]">th</div>
        </div>
      </div>

      <div className="flex h-10 shrink-0 items-center bg-[#1f343e] text-white">
        <div className="flex w-12 shrink-0 justify-center"><svg width="16" height="16" viewBox="0 0 16 16" fill="#fff"><path d="M0 2l7-1v6.500H0zM8 1l8-1v7.500H8zM0 8.500h7V15l-7-1zM8 8.500h8V16l-8-1z" /></svg></div>
        <div className="flex h-10 w-[344px] shrink-0 items-center border border-[#b9b9b9] bg-[#f0f0f0] text-[#404040]">
          <svg width="18" height="18" viewBox="0 0 18 18" fill="none" stroke="#222" strokeWidth="1.400" className="ml-[11px]"><circle cx="11" cy="6" r="5" /><path d="M7.500 9.500L1.500 16" /></svg>
          <div className="ml-[10px] text-[14px] tracking-[-0.030px] whitespace-nowrap">Type here to search</div>
          <div className="ml-auto"><Chess /></div>
        </div>
        <div className="flex w-[50px] shrink-0 justify-center pr-[2px]"><svg width="17" height="16" viewBox="0 0 17 16" fill="none" stroke="#fff" strokeWidth="1.200"><path d="M1.500 0v2.500h11V0M1.500 5.500h11v5h-11zM1.500 16v-2.500h11V16M15.500 0v3M15.500 9v7" /><path d="M14 5h3v3h-3z" fill="#fff" stroke="none" /></svg></div>
        {tasks.map((t, i) => (
          <div key={i} className={"flex h-10 shrink-0 flex-col items-center " + (i === 6 ? "ml-px w-12 bg-[#50606a]" : "w-[49px]")}>
            <div className="flex h-[38px] items-center pt-[2px]">{t}</div>
            {i > 0 && <div className={"h-[2px] bg-[#76b9ed] " + (i === 6 ? "w-12" : "w-10")} />}
          </div>
        ))}
        <svg width="16" height="16" viewBox="0 0 16 16" fill="none" stroke="#fff" strokeWidth="1.200" className="ml-[160px] shrink-0"><circle cx="10.500" cy="4" r="3" /><circle cx="5" cy="7.500" r="2.200" /><path d="M1 14.500c0-5 6-6 7.500-2M7 9c3-3 8-1 8 3" /></svg>
        <svg width="24" height="18" viewBox="0 0 24 18" className="ml-[95px] shrink-0"><circle cx="10" cy="8" r="6.500" fill="#c3d6ef" /><path d="M5 16a4.500 4.500 0 0 1 0-9 7 7 0 0 1 12 0 4.500 4.500 0 0 1 1 9z" fill="#e1eaf6" /><path d="M3 15c5 2 14 2 18-2-1 2-2 3-4 3H6z" fill="#9db9df" /></svg>
        <div className="ml-[7px] w-[92px] shrink-0 pt-px text-[13.500px] tracking-[0.050px] whitespace-pre">{"85°F  Cloudy"}</div>
        <svg width="68" height="18" viewBox="1180 739 68 18" fill="none" stroke="#fff" className="ml-px shrink-0"><path d="M1183 751l5.500-5.500 5.500 5.500" strokeWidth="1.300" /><path d="M1205.500 745.500h2.500l4-3.500v12l-4-3.500h-2.500zM1214 745.500c1 1.500 1 3.500 0 5M1216 743.500c2 3 2 6 0 9M1218.500 742c2.500 4 2.500 8 0 12" /><path d="M1232.500 742.500h12v8h-12zM1238.500 751v3M1234 754.500h8" /><path d="M1229.500 741.500h4v5h-4zM1231.500 747v7" fill="#1f343e" /></svg>
        <div className="ml-[3px] flex w-[60px] shrink-0 flex-col items-center gap-[7px] pb-[2px] text-[11.500px] tracking-[-0.200px]"><div>7:48 AM</div><div>9/1/2022</div></div>
        <svg width="26" height="28" viewBox="1324 735 26 28" className="ml-[12px] shrink-0"><path d="M1326 740h15v13h-6l-3 3v-3h-6z" fill="#fff" /><path d="M1328 743.500h11M1328 746.500h11M1328 749.500h6" stroke="#1f343e" /><circle cx="1340" cy="754" r="7.500" fill="#1f343e" stroke="#8b979e" /><text x="1337" y="758" fontSize="11" fill="#fff" fontFamily="Open Sans">2</text></svg>
      </div>
    </div>
  );
}
